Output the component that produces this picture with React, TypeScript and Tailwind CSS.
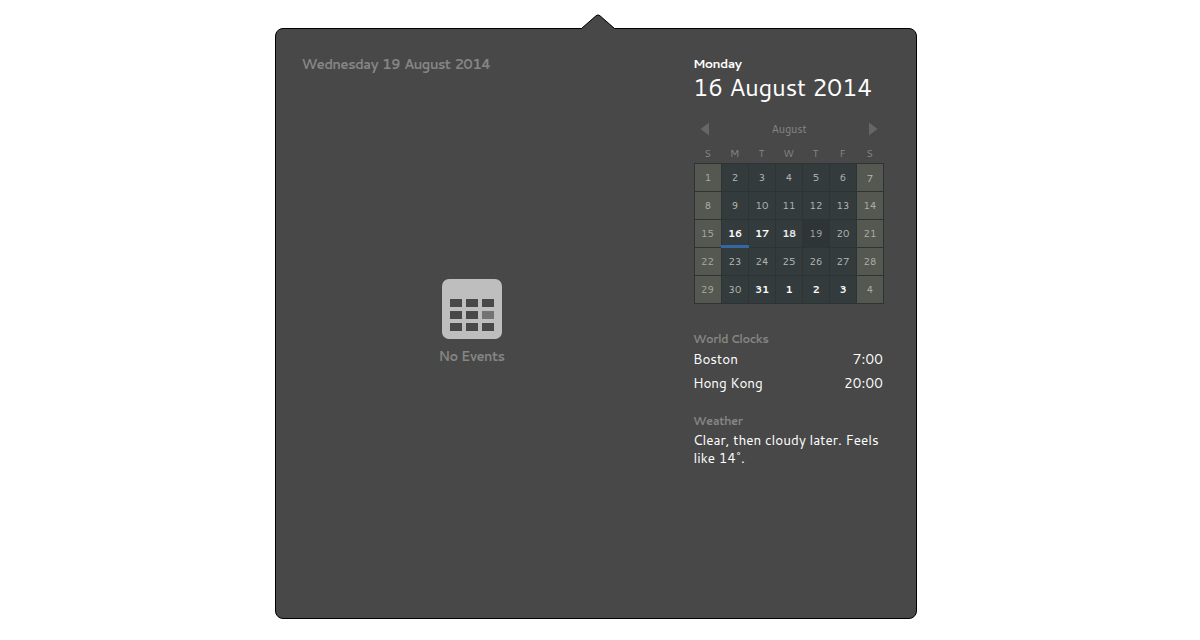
const days = [
  ['1', '2', '3', '4', '5', '6', '7'],
  ['8', '9', '10', '11', '12', '13', '14'],
  ['15', '16', '17', '18', '19', '20', '21'],
  ['22', '23', '24', '25', '26', '27', '28'],
  ['29', '30', '31', '1', '2', '3', '4'],
];

function dayClass(row: number, col: number) {
  if (col === 0 && row > 1) return 'bg-[#555751] pr-px tracking-[0.1px] text-[#a9aba6]';
  if (col === 6 && row === 0) return 'bg-[#555751] pt-px tracking-[0.1px] text-[#b5b8b5]';
  if (col === 0 || col === 6) return 'bg-[#555751] tracking-[0.1px] text-[#b0b2ad]';
  if (row === 2 && col === 4) return 'bg-[#2f3436] tracking-[0.1px] text-[#a9aba6]';
  if (row === 2 && col === 3) return 'bg-[#343b3d] font-semibold tracking-[-0.5px] text-[#eeeeec]';
  if ((row === 2 && col < 4) || (row === 4 && col > 1)) return 'bg-[#343b3d] font-bold tracking-[-0.2px] text-white';
  return 'bg-[#343b3d] tracking-[0.1px] text-[#b8bbb8]';
}

function Calendar() {
  return (
    <section className="mt-[20px] w-[190px]">
      <div className="flex h-[14px] items-center justify-between px-[6px]">
        <svg width="9" height="14" viewBox="0 0 9 14"><path d="M9 0.5v13L0.5 7z" fill="#666" /></svg>
        <span className="text-[11px] leading-[14px] tracking-[-0.15px] text-[#858585]">August</span>
        <svg width="9" height="14" viewBox="0 0 9 14"><path d="M0 0.5v13L8.5 7z" fill="#666" /></svg>
      </div>
      <div className="mt-[10px] grid h-[17px] w-[189px] grid-cols-7 text-center text-[10px] leading-[14px] text-[#858585]">
        {['S', 'M', 'T', 'W', 'T', 'F', 'S'].map((d, i) => <span key={i}>{d}</span>)}
      </div>
      <div className="grid h-[141px] grid-cols-[repeat(7,26px)] grid-rows-[repeat(5,27px)] gap-px border border-[#2e3436] bg-[#2e3436]">
        {days.map((week, r) =>
          week.map((d, c) => (
            <div key={`${r}-${c}`} className={`relative h-[27px] text-center text-[10px] leading-[27px] ${dayClass(r, c)}`}>
              {d}
              {r === 2 && c === 1 && <span className="absolute -left-px bottom-[-1px] h-[3px] w-[28px] bg-[#3465a4]" />}
            </div>
          )),
        )}
      </div>
    </section>
  );
}

function EventsIcon() {
  return (
    <svg width="60" height="60" viewBox="0 0 60 60">
      <rect width="60" height="60" rx="7" fill="#bebebe" />
      {[20, 32, 44].map((y) =>
        [8, 24, 40].map((x) => (
          <rect key={`${x}-${y}`} x={x} y={y} width="12" height="8" fill={x === 40 && y === 32 ? '#737373' : '#484848'} />
        )),
      )}
    </svg>
  );
}

export default function App() {
  return (
    <main className="h-[640px] w-[1200px] overflow-hidden bg-white pt-[28px] pl-[275px] font-['Cantarell','Noto_Sans',sans-serif]">
      <div className="relative flex h-[591px] w-[642px] rounded-[8px] border border-black bg-[#484848]">
        <svg className="absolute -top-[15px] left-[304px]" width="36" height="17" viewBox="0 0 36 17">
          <path d="M0 16.5L1 14.7L16 1.8Q18 0 20 1.8L35 14.7L36 16.5z" fill="#484848" />
          <path d="M0 14.5h1.5L16 1.8Q18 0 20 1.8L34.5 14.5H36" fill="none" stroke="#000" />
        </svg>
        <section className="flex w-[392px] flex-col pt-[26px]">
          <h2 className="ml-[25.5px] text-[13.5px] leading-[18px] font-bold tracking-[-0.77px] whitespace-nowrap text-[#858583] [word-spacing:1.4px]">Wednesday 19 August 2014</h2>
          <div className="mt-[206px] flex flex-col items-center">
            <EventsIcon />
            <span className="mt-[8px] mr-px text-[13px] leading-[18px] font-bold tracking-[-0.48px] text-[#858583]">No Events</span>
          </div>
        </section>
        <aside className="ml-[26px] w-[190px] pt-[25px] text-white">
          <p className="-ml-px text-[12.5px] leading-[18px] font-bold tracking-[-0.65px]">Monday</p>
          <h1 className="-ml-px h-[30px] text-[24px] leading-[30px] tracking-[-0.3px] whitespace-nowrap">16 August 2014</h1>
          <Calendar />
          <section className="mt-[26px] mr-px -ml-px">
            <h3 className="text-[11.5px] leading-[18px] font-bold tracking-[-0.52px] text-[#858583]">World Clocks</h3>
            <div className="-mt-px flex h-[24px] justify-between text-[13.5px] leading-[24px]"><span>Boston</span><span className="tracking-[0.2px]">7:00</span></div>
            <div className="flex h-[24px] justify-between text-[13.5px] leading-[24px] tracking-[-0.1px]"><span>Hong Kong</span><span className="tracking-[0.2px]">20:00</span></div>
          </section>
          <section className="mt-[17px] -ml-px">
            <h3 className="text-[11.5px] leading-[18px] font-bold tracking-[-0.45px] text-[#858583]">Weather</h3>
            <p className="mt-[1px] text-[13.5px] leading-[17.6px] whitespace-nowrap">Clear, then cloudy later. Feels<br /><span className="pl-[0.5px]">like 14</span><span className="-ml-[1px] tracking-[-1px]">˚</span>.</p>
          </section>
        </aside>
      </div>
    </main>
  );
}
